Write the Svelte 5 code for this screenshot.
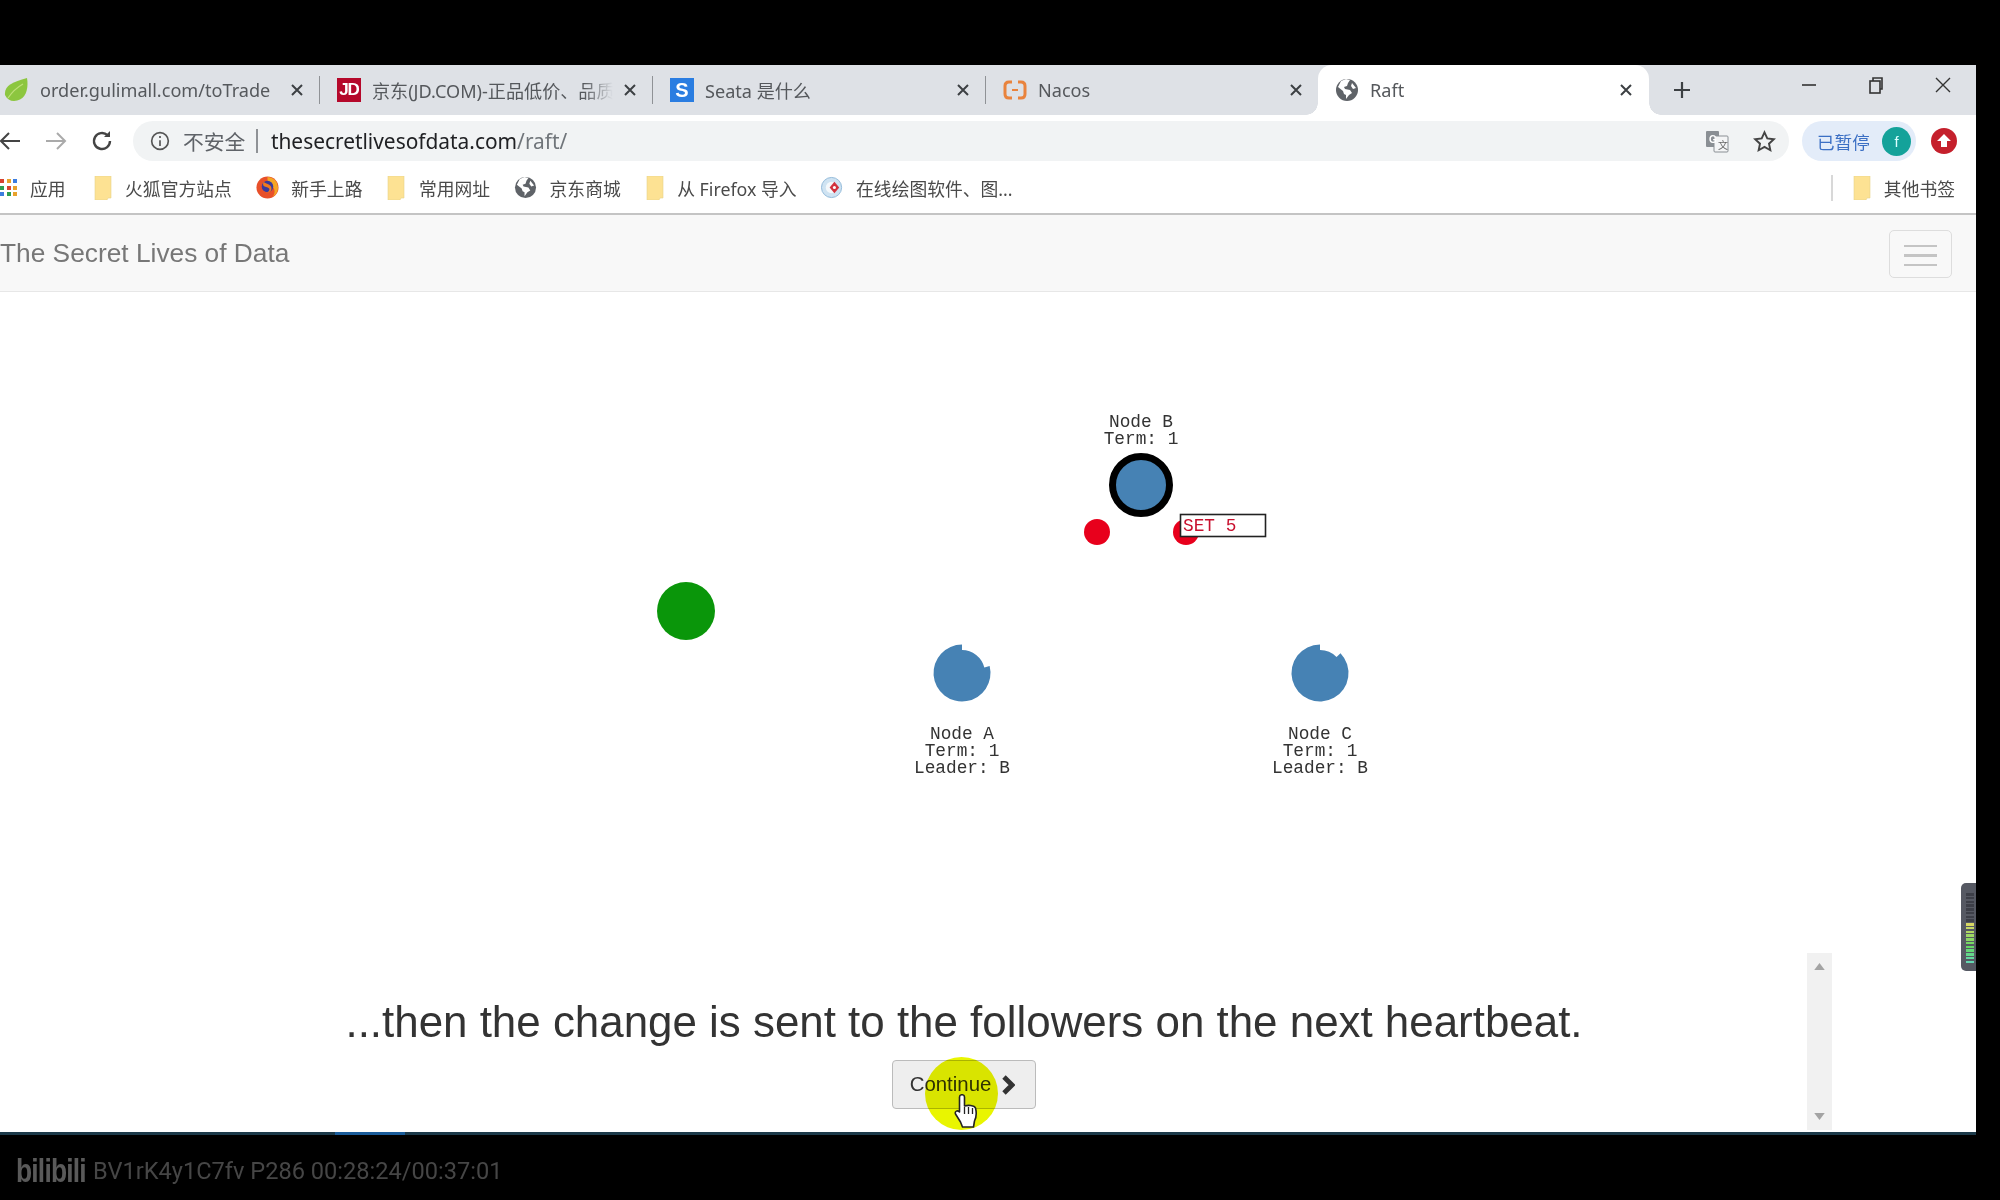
<script>
  const tabs = [
    { title: 'order.gulimall.com/toTrade', icon: 'leaf' },
    { title: '京东(JD.COM)-正品低价、品质保障', icon: 'jd', fade: true },
    { title: 'Seata 是什么', icon: 's' },
    { title: 'Nacos', icon: 'nacos' },
    { title: 'Raft', icon: 'globe', active: true }
  ];

  const bookmarks = [
    { label: '火狐官方站点', icon: 'folder' },
    { label: '新手上路', icon: 'firefox' },
    { label: '常用网址', icon: 'folder' },
    { label: '京东商城', icon: 'globe' },
    { label: '从 Firefox 导入', icon: 'folder' },
    { label: '在线绘图软件、图...', icon: 'draw' }
  ];

  const appDots = ['#d8432f', '#e8a22c', '#3b7de0', '#2f9e52', '#d8432f', '#e8a22c', '#3b7de0', '#2f9e52', '#e8a22c'];

  const followers = [
    { cx: 962, label: 'Node A', notch: 76 },
    { cx: 1320, label: 'Node C', notch: 46 }
  ];

  // follower circle whose election timeout ring is partly used up
  function timeoutShape(cx, cy, outer, inner, deg) {
    const a = (deg * Math.PI) / 180;
    const sx = cx + outer * Math.sin(a);
    const sy = cy - outer * Math.cos(a);
    const ix = cx + inner * Math.sin(a);
    const iy = cy - inner * Math.cos(a);
    return `M${cx} ${cy - outer}A${outer} ${outer} 0 1 0 ${sx} ${sy}L${ix} ${iy}A${inner} ${inner} 0 0 0 ${cx} ${cy - inner}Z`;
  }
</script>

{#snippet icon(name)}
  {#if name === 'leaf'}
    <svg class="ic" viewBox="0 0 24 24"><path d="M1 17C0 8 8 4 23 0c2 12-2 23-13 23-4 0-7-2-9-6z" fill="#8cc63f" /><path d="M4 20C8 14 12 10 19 6" stroke="#bfe07a" stroke-width="1.2" fill="none" /></svg>
  {:else if name === 'jd'}
    <span class="letter jd">JD</span>
  {:else if name === 's'}
    <span class="letter seata">S</span>
  {:else if name === 'nacos'}
    <svg class="ic" viewBox="0 0 24 24" fill="none" stroke="#e9833d" stroke-width="3"><path d="M9 4H6Q2 4 2 8v8q0 4 4 4h3M15 4h3q4 0 4 4v8q0 4-4 4h-3" /><path d="M9 12h6" stroke-width="2" /></svg>
  {:else if name === 'globe'}
    <svg class="ic" viewBox="0 0 24 24"><circle cx="12" cy="12" r="11" fill="#5f6368" /><path d="M3 9l5 4 1 3 2 1v4l3-4 3-2-2-3-5-1-1-2 3-1 1-3 2-3-4-1-5 2zM17 5l4 5-3 1-2-3z" fill="#fff" /></svg>
  {:else if name === 'folder'}
    <svg class="folder" viewBox="0 0 18 24"><path d="M1 0h16v22h-3l-1 2H1z" fill="#fde293" stroke="#e8d48a" stroke-width=".6" /></svg>
  {:else if name === 'firefox'}
    <svg class="ic" viewBox="0 0 24 24"><circle cx="12" cy="12" r="11.5" fill="#e8502a" /><path d="M12 1a11 11 0 0 1 11 11c0 4-2 8-6 10 3-3 3-7 1-10l-3-3-3-2z" fill="#f5a623" /><circle cx="12" cy="11" r="6" fill="#3a3a9c" /><path d="M8 6c3 3 7 2 8 6s-3 6-6 5c2 0 4-1 4-3s-3-2-5-3-2-3-1-5z" fill="#f07a1e" /></svg>
  {:else if name === 'draw'}
    <svg class="ic" viewBox="0 0 24 24"><circle cx="11" cy="12" r="10.5" fill="#cfe3f2" stroke="#8fb8d8" /><circle cx="11" cy="12" r="6" fill="#f4f8fb" /><path d="M14 6l5 6-5 6-5-6z" fill="#d2323e" /><circle cx="14" cy="12" r="1.6" fill="#fff" /></svg>
  {/if}
{/snippet}

{#snippet closeX()}
  <svg class="tab-close" viewBox="0 0 12 12"><path d="M1 1l10 10M11 1L1 11" stroke="#3c4043" stroke-width="2" /></svg>
{/snippet}

<div class="screen">
  <div class="browser">
    <div class="tabstrip">
      {#each tabs as tab, i}
        <div class="tab" class:active={tab.active} class:first={i === 0}>
          {@render icon(tab.icon)}
          <span class="tab-title" class:fade={tab.fade}>{tab.title}</span>
          {@render closeX()}
        </div>
      {/each}
      <svg class="new-tab" viewBox="0 0 18 18"><path d="M9 1v16M1 9h16" stroke="#3c4043" stroke-width="2.2" /></svg>
      <div class="win-controls">
        <svg viewBox="0 0 18 18"><path d="M2 9h14" stroke="#333" stroke-width="1.6" /></svg>
        <svg viewBox="0 0 18 18" fill="none" stroke="#333" stroke-width="1.6"><rect x="3" y="5" width="10" height="12" /><path d="M6 5V2h9v11h-2" /></svg>
        <svg viewBox="0 0 18 18"><path d="M2 2l14 14M16 2L2 16" stroke="#333" stroke-width="1.4" /></svg>
      </div>
    </div>

    <div class="toolbar">
      <div class="nav-buttons">
        <svg viewBox="0 0 24 24" fill="none" stroke="#444" stroke-width="2"><path d="M22 12H3M11 4l-8 8 8 8" /></svg>
        <svg viewBox="0 0 24 24" fill="none" stroke="#aaa" stroke-width="2"><path d="M2 12h19M13 4l8 8-8 8" /></svg>
        <svg viewBox="0 0 24 24" fill="none" stroke="#444" stroke-width="2.4"><path d="M20 12a8 8 0 1 1-2.5-5.8" /><path d="M20 2v6h-6" fill="#444" stroke="none" /></svg>
      </div>
      <div class="omnibox">
        <svg class="info" viewBox="0 0 24 24" fill="none" stroke="#555" stroke-width="2"><circle cx="12" cy="12" r="10" /><path d="M12 11v7M12 6v2.4" /></svg>
        <span class="insecure">不安全</span>
        <span class="omni-sep"></span>
        <span class="url">thesecretlivesofdata.com<span class="url-path">/raft/</span></span>
        <svg class="translate" viewBox="0 0 24 24"><rect x="1" y="2" width="13" height="16" rx="1" fill="#8a8f94" /><rect x="9" y="7" width="14" height="16" rx="1" fill="#f4f5f6" stroke="#8a8f94" /><text x="4" y="14" class="tr-g">G</text><text x="13" y="20" class="tr-z">文</text></svg>
        <svg class="star" viewBox="0 0 24 24" fill="none" stroke="#444" stroke-width="2"><path d="M12 2.5l2.9 6.3 6.9.8-5.1 4.7 1.4 6.8-6.1-3.4-6.1 3.4 1.4-6.8-5.1-4.7 6.9-.8z" /></svg>
      </div>
      <div class="profile">
        <span class="paused">已暂停</span>
        <span class="avatar">f</span>
      </div>
      <svg class="ext" viewBox="0 0 26 26"><circle cx="13" cy="13" r="13" fill="#c5202c" /><path d="M13 6l7 7h-4v6h-6v-6H6z" fill="#fff" /></svg>
    </div>

    <div class="bookmarks">
      <div class="apps">
        {#each appDots as color}
          <i style:background={color}></i>
        {/each}
      </div>
      <span class="bm-label apps-label">应用</span>
      {#each bookmarks as bm}
        <div class="bm">
          {@render icon(bm.icon)}
          <span class="bm-label">{bm.label}</span>
        </div>
      {/each}
      <div class="bm-other">
        <span class="bm-sep"></span>
        {@render icon('folder')}
        <span class="bm-label">其他书签</span>
      </div>
    </div>

    <nav class="navbar">
      <span class="brand">The Secret Lives of Data</span>
      <span class="burger"><i></i><i></i><i></i></span>
    </nav>

    <main class="page">
      <svg class="sim" viewBox="0 292 1976 661">
        <circle cx="686" cy="611" r="29" fill="#0a960a" />

        <text class="sim-label" x="1141" y="427">Node B</text>
        <text class="sim-label" x="1141" y="444">Term: 1</text>
        <circle cx="1141" cy="485" r="28.5" fill="steelblue" stroke="#000" stroke-width="7" />

        <circle cx="1097" cy="532" r="13" fill="#e8001c" />
        <circle cx="1186" cy="532" r="13" fill="#e8001c" />
        <rect x="1180.5" y="514.5" width="85" height="22" fill="#fff" stroke="#222" stroke-width="1.6" />
        <text class="set-label" x="1183" y="531">SET 5</text>

        {#each followers as node}
          <path d={timeoutShape(node.cx, 673, 28.5, 23, node.notch)} fill="steelblue" />
          <text class="sim-label" x={node.cx} y="739">{node.label}</text>
          <text class="sim-label" x={node.cx} y="756">Term: 1</text>
          <text class="sim-label" x={node.cx} y="773">Leader: B</text>
        {/each}
      </svg>

      <section class="panel">
        <div class="message">
          <p>...then the change is sent to the followers on the next heartbeat.</p>
          <button class="continue">Continue
            <svg viewBox="0 0 14 20"><path d="M3 2l8 8-8 8" fill="none" stroke="#333" stroke-width="4.8" /></svg>
          </button>
        </div>
        <div class="scrollbar">
          <svg viewBox="0 0 12 8"><path d="M6 0l6 8H0z" fill="#a3a3a3" /></svg>
          <svg viewBox="0 0 12 8"><path d="M0 0h12L6 8z" fill="#a3a3a3" /></svg>
        </div>
      </section>

      <span class="highlight"></span>
      <svg class="hand" viewBox="0 0 24 34"><path d="M5 3c0-3 5-3 5 0v9c3-1 10-1 11 2 1 4 1 9-1 13l-1 6H8l-2-5-5-8c-1-3 2-4 4-2z" fill="#fff" stroke="#222" stroke-width="1.6" stroke-linejoin="round" /><path d="M10 13v7M14 13v7M18 14v6" stroke="#222" stroke-width="1.3" /></svg>
      <div class="meter">
        {#each Array(19) as _, i}
          <i style:background={i > 7 ? `hsl(${60 + (i - 8) * 10}, 60%, 62%)` : null}></i>
        {/each}
      </div>
    </main>

    <div class="progress"><span></span></div>
  </div>

  <footer class="watermark">
    <span class="logo">bilibili</span>
    <span>BV1rK4y1C7fv P286 00:28:24/00:37:01</span>
  </footer>
</div>

<style>
  :global(body) {
    margin: 0;
    background: #000;
  }

  .screen {
    width: 2000px;
    height: 1200px;
    padding-top: 65px;
    box-sizing: border-box;
    background: #000;
    overflow: hidden;
    font-family: "Noto Sans", "Noto Sans CJK SC", sans-serif;
    filter: blur(0.45px);
  }

  .browser {
    width: 1976px;
    height: 1070px;
    display: flex;
    flex-direction: column;
    background: #fff;
  }

  /* tabs */
  .tabstrip {
    height: 50px;
    flex: none;
    display: flex;
    align-items: stretch;
    background: #dee1e6;
  }

  .tab {
    position: relative;
    width: 333px;
    box-sizing: border-box;
    padding: 0 17px 0 17px;
    display: flex;
    align-items: center;
    gap: 11px;
    font-size: 18.1px;
    color: #55585c;
  }

  .tab::after {
    content: "";
    position: absolute;
    right: 0;
    top: 11px;
    height: 28px;
    width: 1.5px;
    background: #8f9296;
  }

  .tab.first {
    width: 320px;
    padding-left: 4px;
    gap: 12px;
  }

  .tab.active {
    width: 331px;
    margin-left: -1px;
    background: #fff;
    border-radius: 14px 14px 0 0;
    z-index: 1;
  }

  .tab:nth-child(4)::after,
  .tab.active::after {
    display: none;
  }

  .tab.active::before,
  .tab.active::after {
    content: "";
    display: block;
    position: absolute;
    bottom: 0;
    top: auto;
    width: 12px;
    height: 12px;
    background: radial-gradient(circle at 0 0, #dee1e6 11.5px, #fff 12px);
  }

  .tab.active::before {
    left: -12px;
  }

  .tab.active::after {
    right: -12px;
    background: radial-gradient(circle at 100% 0, #dee1e6 11.5px, #fff 12px);
  }

  .tab-title {
    flex: 1;
    min-width: 0;
    white-space: nowrap;
    overflow: hidden;
  }

  .tab-title.fade {
    mask-image: linear-gradient(to right, #000 88%, transparent 100%);
  }

  .ic {
    width: 24px;
    height: 24px;
    flex: none;
  }

  .letter {
    width: 24px;
    height: 24px;
    flex: none;
    display: flex;
    align-items: center;
    justify-content: center;
    color: #fff;
    font-family: "Liberation Sans", sans-serif;
    font-weight: 700;
  }

  .jd {
    background: #b5082b;
    font-size: 17px;
    letter-spacing: -1px;
  }

  .seata {
    background: #2a7de1;
    font-size: 20px;
  }

  .tab-close {
    width: 12px;
    height: 12px;
    flex: none;
  }

  .new-tab {
    width: 18px;
    height: 18px;
    align-self: center;
    margin-left: 24px;
  }

  .win-controls {
    margin-left: auto;
    margin-right: 24px;
    display: flex;
    gap: 49px;
    margin-top: 11px;
  }

  .win-controls svg {
    width: 18px;
    height: 18px;
  }

  /* address bar */
  .toolbar {
    height: 47px;
    flex: none;
    box-sizing: border-box;
    padding-top: 5px;
    display: flex;
    align-items: center;
    background: #fff;
  }

  .nav-buttons {
    width: 135px;
    flex: none;
    box-sizing: border-box;
    margin-left: -2px;
    display: flex;
    align-items: center;
    gap: 22px;
  }

  .nav-buttons svg {
    width: 24px;
    height: 24px;
    flex: none;
  }

  .omnibox {
    width: 1656px;
    height: 40px;
    flex: none;
    box-sizing: border-box;
    padding: 0 13px 0 17px;
    display: flex;
    align-items: center;
    border-radius: 20px;
    background: #f1f3f4;
  }

  .info {
    width: 20px;
    height: 20px;
    flex: none;
  }

  .insecure {
    margin-left: 13px;
    font-size: 20.8px;
    color: #5f6368;
  }

  .omni-sep {
    width: 1.5px;
    height: 24px;
    margin: 0 13px 0 11px;
    background: #8f9296;
  }

  .url {
    font-size: 20.9px;
    color: #202124;
  }

  .url-path {
    color: #70757a;
  }

  .translate {
    width: 24px;
    height: 24px;
    margin-left: auto;
  }

  .tr-g {
    font: 700 10px "Liberation Sans", sans-serif;
    fill: #fff;
  }

  .tr-z {
    font: 10px "Noto Sans CJK SC", sans-serif;
    fill: #666;
  }

  .star {
    width: 23px;
    height: 23px;
    margin-left: 24px;
  }

  .profile {
    width: 114px;
    height: 40px;
    flex: none;
    box-sizing: border-box;
    margin-left: 13px;
    padding: 0 5px 0 15px;
    display: flex;
    align-items: center;
    justify-content: space-between;
    border-radius: 20px;
    background: #e3ecf9;
  }

  .paused {
    font-size: 17.6px;
    color: #3b6fc4;
  }

  .avatar {
    width: 29px;
    height: 29px;
    display: flex;
    align-items: center;
    justify-content: center;
    border-radius: 50%;
    background: #14a29a;
    color: #dff;
    font: 15px "Liberation Sans", sans-serif;
  }

  .ext {
    width: 26px;
    height: 26px;
    margin-left: 15px;
    flex: none;
  }

  /* bookmarks */
  .bookmarks {
    height: 53px;
    flex: none;
    box-sizing: border-box;
    border-bottom: 2px solid #c4c4c4;
    display: flex;
    align-items: center;
    gap: 24px;
    background: #fff;
  }

  .apps {
    width: 17px;
    height: 17px;
    flex: none;
    display: grid;
    grid-template-columns: repeat(3, 4px);
    gap: 2.5px;
  }

  .apps i {
    height: 4px;
  }

  .apps-label {
    margin: 0 3px 0 -11px;
  }

  .bm {
    display: flex;
    align-items: center;
    gap: 12.5px;
  }

  .bm .ic {
    width: 23px;
    height: 23px;
  }

  .bm-label {
    font-size: 17.8px;
    color: #4a4a4a;
    white-space: nowrap;
  }

  .folder {
    width: 20px;
    height: 24px;
    flex: none;
  }

  .bm-other {
    margin-left: auto;
    margin-right: 21px;
    display: flex;
    align-items: center;
    gap: 12px;
  }

  .bm-sep {
    width: 1.5px;
    height: 26px;
    background: #d8d8d8;
    margin-right: 7px;
  }

  /* site */
  .navbar {
    height: 77px;
    flex: none;
    box-sizing: border-box;
    padding: 1px 24px 0 0;
    display: flex;
    align-items: center;
    justify-content: space-between;
    background: #f8f8f8;
    border-bottom: 1px solid #e7e7e7;
  }

  .brand {
    font: 26.3px "Liberation Sans", sans-serif;
    color: #777;
  }

  .burger {
    width: 63px;
    height: 48px;
    box-sizing: border-box;
    padding-top: 14px;
    display: flex;
    flex-direction: column;
    align-items: center;
    gap: 7px;
    border: 1px solid #ddd;
    border-radius: 5px;
  }

  .burger i {
    width: 33px;
    height: 2.5px;
    background: #c4c4c4;
  }

  .page {
    position: relative;
    flex: 1;
    min-height: 0;
    display: flex;
    flex-direction: column;
    background: #fff;
  }

  .sim {
    width: 1976px;
    height: 661px;
    flex: none;
    display: block;
  }

  .sim-label,
  .set-label {
    font: 17.8px "Liberation Mono", monospace;
  }

  .sim-label {
    fill: #333;
    text-anchor: middle;
  }

  .set-label {
    fill: #c8102e;
  }

  .panel {
    height: 178px;
    flex: none;
    box-sizing: border-box;
    padding-left: 121px;
    display: flex;
    align-items: flex-start;
  }

  .message {
    width: 1686px;
    padding-top: 45px;
    display: flex;
    flex-direction: column;
    align-items: center;
  }

  .message p {
    margin: 0 0 15px;
    font: 43.9px/47px "Liberation Sans", sans-serif;
    color: #333;
    white-space: nowrap;
  }

  .continue {
    width: 144px;
    height: 49px;
    padding: 0 3px 0 0;
    display: flex;
    align-items: center;
    justify-content: center;
    gap: 10px;
    background: #eee;
    border: 1.5px solid #bbb;
    border-radius: 4px;
    font: 20.4px "Liberation Sans", sans-serif;
    color: #333;
  }

  .continue svg {
    width: 14px;
    height: 20px;
  }

  .scrollbar {
    width: 25px;
    height: 177px;
    flex: none;
    box-sizing: border-box;
    padding: 10px 0;
    display: flex;
    flex-direction: column;
    align-items: center;
    justify-content: space-between;
    background: #f1f1f1;
  }

  .scrollbar svg {
    width: 11px;
    height: 7px;
  }

  /* recording overlays */
  .highlight {
    position: absolute;
    left: 925px;
    top: 765px;
    width: 73px;
    height: 73px;
    border-radius: 50%;
    background: #e9f500;
    mix-blend-mode: multiply;
  }

  .hand {
    position: absolute;
    left: 954px;
    top: 802px;
    width: 25px;
    height: 34px;
  }

  .meter {
    position: absolute;
    right: 0;
    top: 591px;
    width: 15px;
    height: 88px;
    box-sizing: border-box;
    padding: 10px 2px 8px 5px;
    display: flex;
    flex-direction: column;
    justify-content: space-between;
    background: #565963;
    border-radius: 5px 0 0 5px;
  }

  .meter i {
    height: 2.5px;
    background: #3d3f48;
  }

  .progress {
    height: 3px;
    flex: none;
    background: #1c3a4a;
  }

  .progress span {
    display: block;
    width: 70px;
    height: 3px;
    margin-left: 335px;
    background: #1a5c9a;
  }

  .watermark {
    height: 65px;
    box-sizing: border-box;
    padding: 7px 0 0 16px;
    display: flex;
    align-items: center;
    gap: 8px;
    font: 23.6px Roboto, sans-serif;
    color: #464646;
  }

  .logo {
    font: 700 33px "Liberation Sans", sans-serif;
    color: #5a5a5a;
    letter-spacing: -1px;
    width: 69px;
    display: block;
    transform: scaleX(0.8);
    transform-origin: left center;
  }
</style>
